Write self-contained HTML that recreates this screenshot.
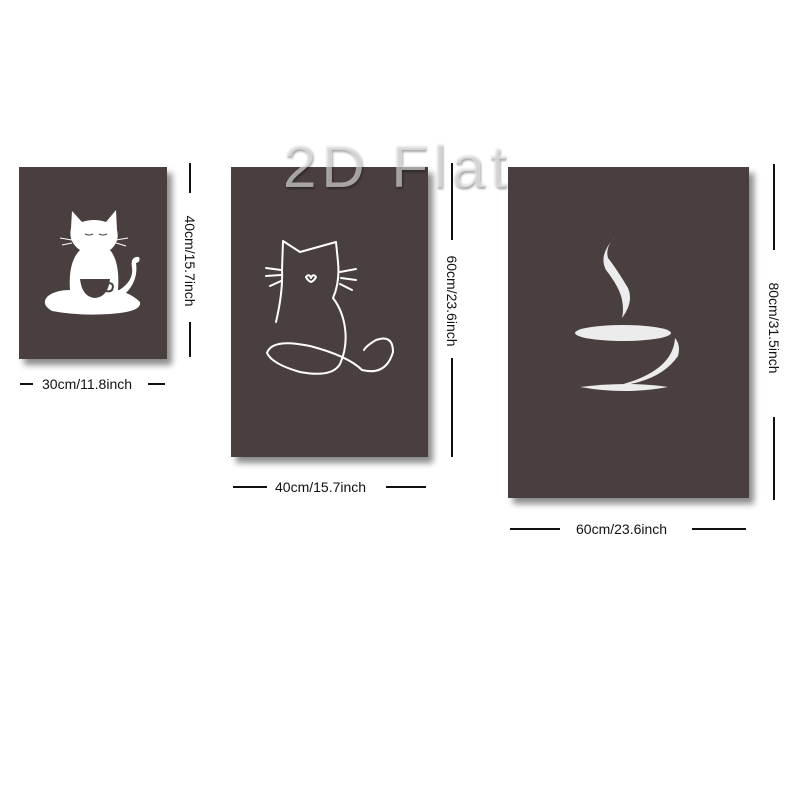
<!DOCTYPE html>
<html><head><style>
body{margin:0;width:800px;height:800px;background:#fff;position:relative;overflow:hidden;font-family:"Liberation Sans",sans-serif}
.p{position:absolute;background:#4a3f3f;box-shadow:5px 6px 6px rgba(0,0,0,.45)}
.l{position:absolute;background:#111}
.t{position:absolute;font-size:14px;color:#111;white-space:nowrap}
.v{position:absolute;font-size:14px;color:#111;white-space:nowrap;transform:rotate(90deg);transform-origin:center;text-align:center;width:120px;height:16px;line-height:16px}
</style></head><body>
<div class="p" style="left:19px;top:167px;width:148px;height:192px"></div>
<div class="p" style="left:231px;top:167px;width:197px;height:290px"></div>
<div class="p" style="left:508px;top:167px;width:241px;height:331px"></div>
<div style="position:absolute;left:283px;top:132px;font-size:60px;color:rgba(240,240,240,.6);letter-spacing:5px;text-shadow:1px 2px 2px rgba(0,0,0,.35)">2D Flat</div>
<svg width="800" height="800" style="position:absolute;left:0;top:0">
<g fill="#fff">
<path d="M72 211 L82 222 Q94 218 106 222 L116 210 L117 230 Q120 242 110 250 Q120 262 118 290 Q132 294 140 302 Q142 312 110 314 Q78 316 52 311 Q40 304 48 296 Q56 290 70 290 Q68 262 80 250 Q68 242 71 228 Z"/>
<path d="M116 292 Q134 282 132 268 Q130 256 139 257 Q141 262 136 263 Q139 284 120 298 Z"/>
</g>
<path d="M80 279 L110 279 Q108 297 95 298 Q82 297 80 279 Z" fill="#4a3f3f"/>
<path d="M108 283 q7 0 4 7 q-2 2 -6 1" stroke="#4a3f3f" stroke-width="2" fill="none"/>
<path d="M93 276 q-4 -4 0 -8 q4 -4 0 -8" stroke="#fff" stroke-width="1" fill="none"/>
<g stroke="#4a3f3f" stroke-width="1" fill="none"><path d="M85 234 q4 2 8 0 M99 234 q4 2 8 0"/></g>
<g stroke="#fff" stroke-width="1" fill="none"><path d="M60 238 L72 240 M62 245 L72 243 M116 240 L128 238 M116 243 L126 246"/></g>
<g stroke="#fff" stroke-width="2" fill="none" stroke-linecap="round" stroke-linejoin="round">
<path d="M276 322 Q283 292 282 270 L283 241 L300 252 Q318 247 336 242 L338 262 Q340 282 333 298 C346 315 350 342 340 364 Q332 378 300 372 Q272 364 267 353 Q272 338 310 346 Q348 356 362 370 Q386 376 393 352 Q393 334 376 340 Q366 346 364 350"/>
<path d="M266 268 L281 270 M266 276 L281 275 M270 286 L281 281 M340 272 L356 269 M341 278 L356 280 M340 284 L352 290"/>
<path d="M306 277 q3 -4 5 1 q2 -5 5 -1 q-2 4 -5 5 q-3 -1 -5 -5"/>
</g>
<g fill="#ececec">
<path d="M615 237 Q598 255 606 270 Q620 288 622 300 Q624 310 622 318 Q634 302 628 288 Q616 268 608 258 Q605 247 615 237 Z"/>
<ellipse cx="623" cy="333" rx="48" ry="8"/>
<path d="M675 338 Q673 372 616 386 Q660 382 678 356 Q681 345 675 338 Z"/>
<path d="M580 387 Q628 381 668 387 Q625 395 580 387 Z"/>
</g>
</svg>
<div class="l" style="left:20px;top:383px;width:13px;height:2px"></div>
<div class="t" style="left:42px;top:376px">30cm/11.8inch</div>
<div class="l" style="left:148px;top:383px;width:17px;height:2px"></div>
<div class="l" style="left:189px;top:163px;width:2px;height:30px"></div>
<div class="v" style="left:130px;top:253px">40cm/15.7inch</div>
<div class="l" style="left:189px;top:322px;width:2px;height:35px"></div>
<div class="l" style="left:233px;top:486px;width:34px;height:2px"></div>
<div class="t" style="left:275px;top:479px">40cm/15.7inch</div>
<div class="l" style="left:386px;top:486px;width:40px;height:2px"></div>
<div class="l" style="left:451px;top:163px;width:2px;height:77px"></div>
<div class="v" style="left:392px;top:293px">60cm/23.6inch</div>
<div class="l" style="left:451px;top:358px;width:2px;height:99px"></div>
<div class="l" style="left:510px;top:528px;width:50px;height:2px"></div>
<div class="t" style="left:576px;top:521px">60cm/23.6inch</div>
<div class="l" style="left:692px;top:528px;width:54px;height:2px"></div>
<div class="l" style="left:773px;top:164px;width:2px;height:86px"></div>
<div class="v" style="left:714px;top:320px">80cm/31.5inch</div>
<div class="l" style="left:773px;top:417px;width:2px;height:83px"></div>
</body></html>
